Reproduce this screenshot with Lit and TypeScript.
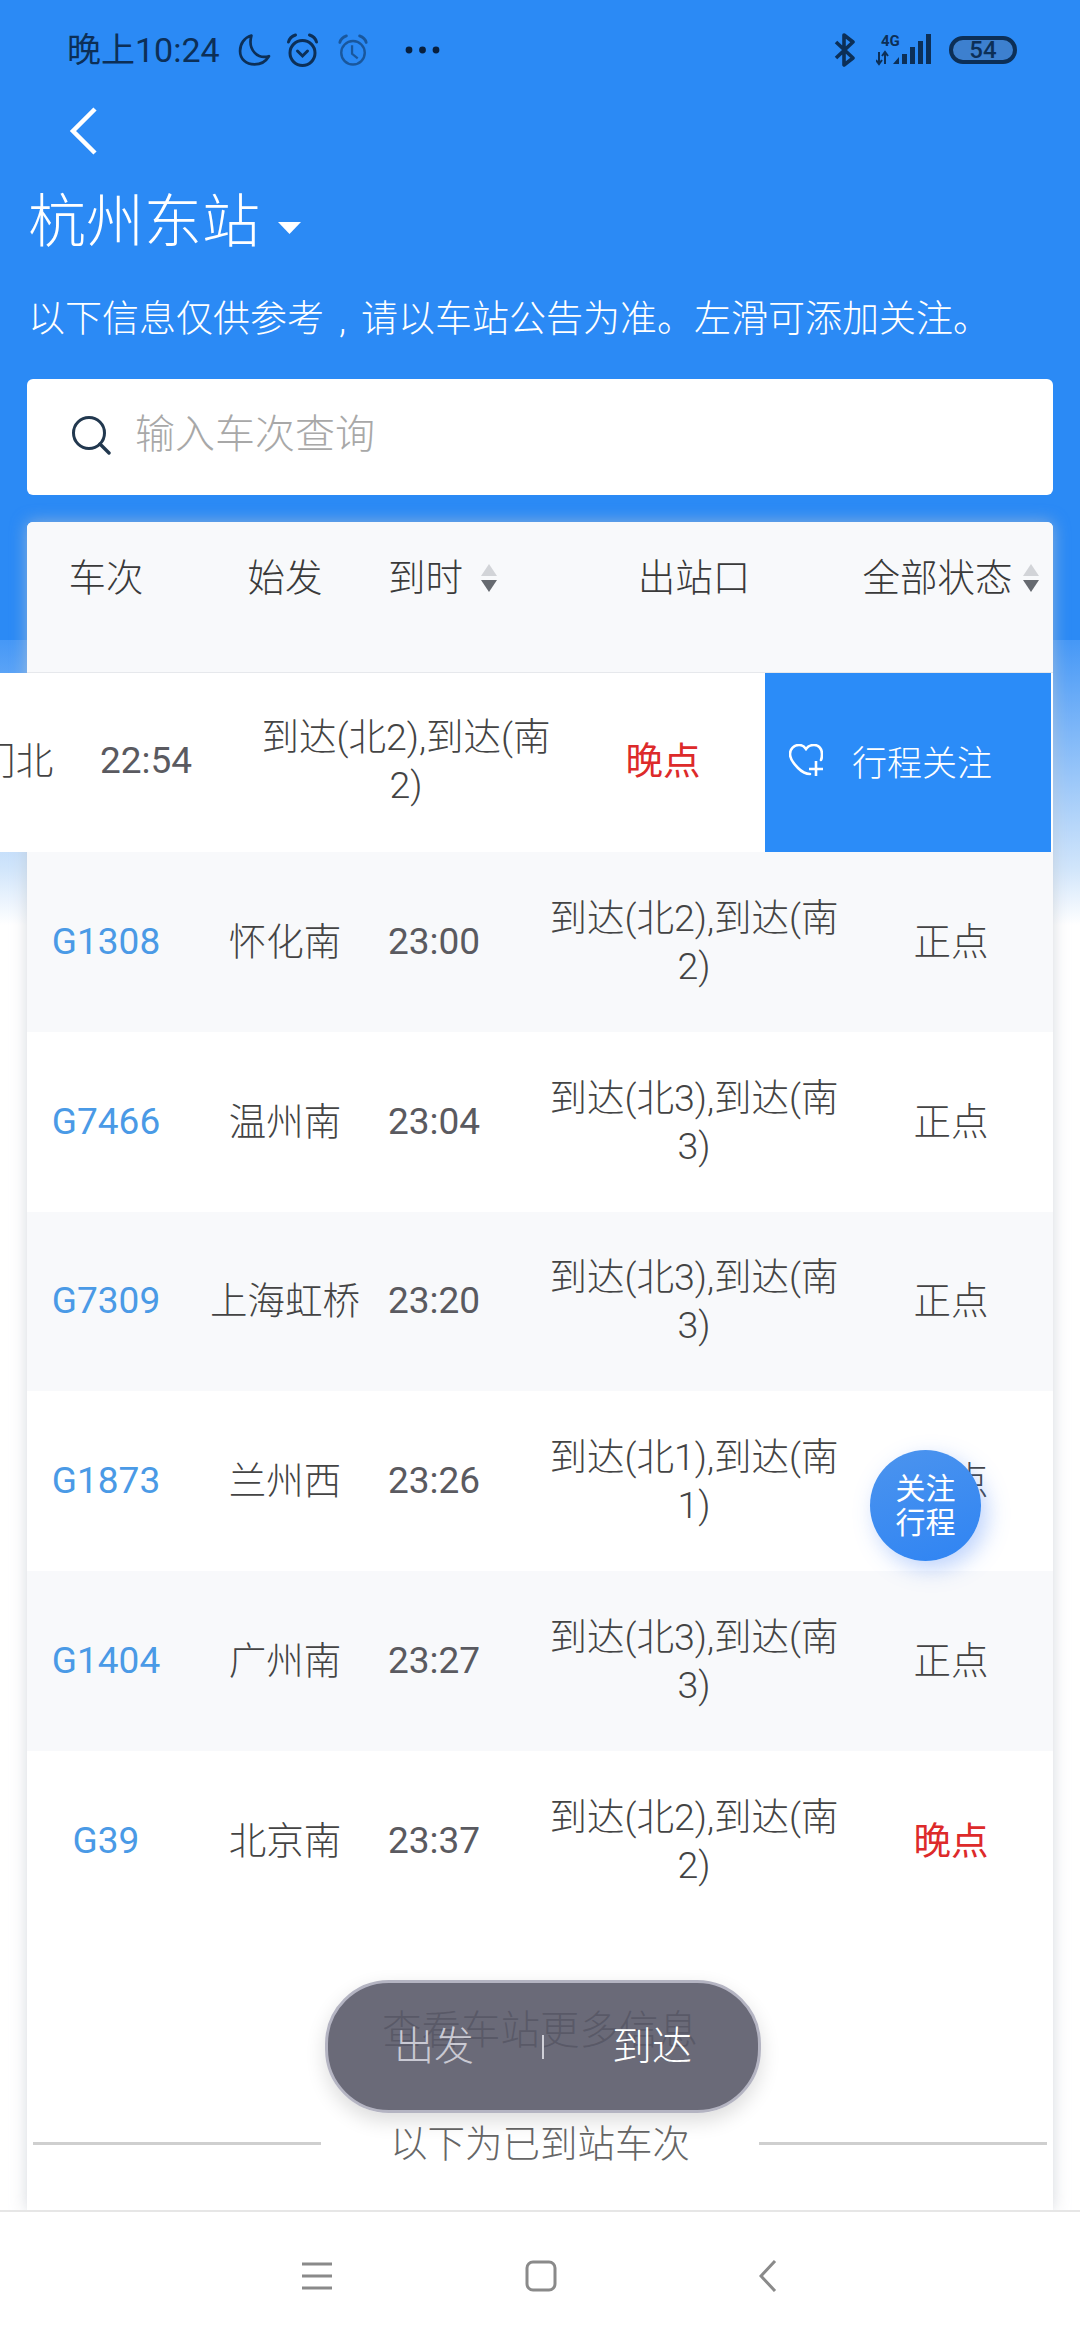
import { LitElement, html, css, svg } from "lit";
import { customElement } from "lit/decorators.js";

interface Row { no: string; from: string; time: string; exit: string; status: string; late?: boolean; }

const rows: Row[] = [
  { no: "G1308", from: "怀化南", time: "23:00", exit: "到达(北2),到达(南2)", status: "正点" },
  { no: "G7466", from: "温州南", time: "23:04", exit: "到达(北3),到达(南3)", status: "正点" },
  { no: "G7309", from: "上海虹桥", time: "23:20", exit: "到达(北3),到达(南3)", status: "正点" },
  { no: "G1873", from: "兰州西", time: "23:26", exit: "到达(北1),到达(南1)", status: "正点" },
  { no: "G1404", from: "广州南", time: "23:27", exit: "到达(北3),到达(南3)", status: "正点" },
  { no: "G39", from: "北京南", time: "23:37", exit: "到达(北2),到达(南2)", status: "晚点", late: true },
];

const sort = html`<svg class="sort" width="18" height="28" viewBox="0 0 18 28"><path d="M9 0L17 12H1Z" fill="#d2d4d8"/><path d="M1 16H17L9 28Z" fill="#666a70"/></svg>`;

const ears = svg`<path d="M3 9C4 5 7 3 10 2M31 9C30 5 27 3 24 2" fill="none" stroke="#0c2f57" stroke-width="3" stroke-linecap="round"/>`;

@customElement("app-root")
export class AppRoot extends LitElement {
  static styles = css`
    :host {
      display: block;
      position: relative;
      width: 1080px;
      height: 2340px;
      overflow: hidden;
      font-family: Roboto, "Noto Sans CJK SC", sans-serif;
      font-weight: 300;
      color: #444;
      font-size: 37.5px;
      background: linear-gradient(to bottom, #2b8af5 0, #2b8af5 640px, #4698f6 640px, #d2e6fb 870px, #fff 925px);
    }
    .page { display: flex; flex-direction: column; height: 2340px; }
    .main { flex: 1; min-height: 0; display: flex; flex-direction: column; overflow: hidden; }

    .status { height: 98px; flex: none; box-sizing: border-box; padding: 2px 63px 0 67px; display: flex; align-items: center; color: #0c2f57; font-weight: 400; }
    .clock { font-size: 34px; line-height: 40px; margin-right: 18px; }
    .alarm { margin-left: 14px; }
    .alarm2 { margin-left: 17px; opacity: .55; }
    .dots { margin-left: 36px; }
    .right { margin-left: auto; display: flex; align-items: center; }
    .signal { margin-left: 20px; }
    .battery { margin-left: 16px; width: 68px; height: 28px; box-sizing: border-box; border: 4px solid #0c2f57; border-radius: 14px; background: #3d80cf; display: flex; align-items: center; justify-content: center; font-size: 24px; font-weight: 500; line-height: 20px; }

    .back { height: 66px; flex: none; padding-left: 69px; display: flex; align-items: center; }
    .title { margin-top: 23px; height: 70px; padding-left: 28px; flex: none; display: flex; align-items: center; color: #fff; font-size: 58px; line-height: 70px; }
    .caret { margin: 12px 0 0 18px; }
    .note { margin-top: 38px; padding-left: 28px; flex: none; color: #fff; font-size: 37px; line-height: 50px; white-space: nowrap; }
    .comma { display: inline-block; width: 37px; text-align: center; }

    .search { margin: 34px 27px 0; height: 116px; flex: none; background: #fff; border-radius: 6px; display: flex; align-items: center; padding-left: 44px; padding-bottom: 4px; box-sizing: border-box; }
    .placeholder { margin-left: 24px; color: #a8a8a8; font-size: 40px; line-height: 50px; }

    .card { margin: 27px 27px 0; flex: 1; background: #fff; border-radius: 6px 6px 0 0; box-shadow: 0 0 16px rgba(190, 195, 205, .65); }
    .grid { display: grid; grid-template-columns: 158px 200px 154px 310px 204px; align-items: center; text-align: center; }
    .head { height: 151px; box-sizing: border-box; padding-bottom: 38px; background: #f8f9fb; border-radius: 6px 6px 0 0; border-bottom: 1px solid #e6e8ec; color: #3a3a3a; line-height: 48px; }
    .cell-inline { display: flex; align-items: center; justify-content: center; gap: 9px; }
    .time { text-align: left; padding-left: 3px; }
    .row .time, .slid .time { font-weight: 400; font-size: 37px; color: #5a5a60; }
    .head .time { justify-content: flex-start; gap: 17px; }
    .row { height: 179.8px; line-height: 48px; background: #fff; }
    .row.odd { background: #f8f9fb; }
    .exit { padding: 0 5px; }
    .no { color: #4a9ae6; font-weight: 400; font-size: 37px; }
    .late { color: #dd2a2a; font-weight: 400; }

    .slid { display: flex; width: 1312px; height: 179px; margin-left: -288px; }
    .slid .grid { width: 1026px; box-sizing: border-box; padding-bottom: 3px; background: #fff; line-height: 48px; }
    .action { width: 286px; background: #2b8cf8; color: #fff; display: flex; align-items: center; padding: 0 0 4px 24px; box-sizing: border-box; gap: 29px; font-size: 35px; }

    .more { text-align: center; margin-top: 76px; line-height: 48px; color: #555; font-size: 39.5px; }
    .divider { display: flex; align-items: center; justify-content: center; margin-top: 65px; padding: 0 6px; color: #666; line-height: 48px; }
    .line { flex: 1; height: 3px; background: #cfcfcf; }
    .divider-text { width: 438px; text-align: center; }

    .float { position: absolute; left: 870px; top: 1450px; width: 111px; height: 111px; border-radius: 50%; background: linear-gradient(160deg, #4c94ee, #2f84f3); color: #fff; font-size: 30px; font-weight: 400; line-height: 34px; text-align: center; display: flex; align-items: center; justify-content: center; box-shadow: 6px 8px 22px rgba(70, 130, 245, .35); }
    .pill { position: absolute; left: 325px; top: 1980px; width: 436px; height: 133px; box-sizing: border-box; border: 3px solid #b4b4c2; border-radius: 64px; background: rgba(90, 90, 105, .9); box-shadow: 0 8px 20px rgba(0, 0, 0, .14); display: flex; align-items: center; justify-content: center; gap: 68px; font-size: 40px; line-height: 48px; color: #c9c9d3; }
    .pill .active { color: #fff; }
    .sep { width: 2px; height: 24px; background: #d0d0d8; }

    .nav { height: 130px; flex: none; box-sizing: border-box; background: #fff; border-top: 2px solid #e6e6e6; display: flex; align-items: center; gap: 193px; padding-left: 302px; }
    .nav-back { margin-left: 9px; }
  `;

  private cells(r: { from: string; time: string; exit: string }) {
    return html`
      <div>${r.from}</div>
      <div class="time">${r.time}</div>
      <div class="exit">${r.exit}</div>`;
  }

  render() {
    return html`
      <div class="page">
        <div class="main">
          <div class="status">
            <span class="clock">晚上10:24</span>
            <svg width="33" height="34" viewBox="0 0 32 32"><path d="M13 2C6 4 2 10 2 17C2 25 8 30 16 30C22 30 27 27 30 22C20 25 9 17 13 2Z" fill="none" stroke="#0c2f57" stroke-width="2.6" stroke-linejoin="round"/></svg>
            <svg class="alarm" width="35" height="34" viewBox="0 0 34 34">${ears}<circle cx="17" cy="20" r="12.5" fill="none" stroke="#0c2f57" stroke-width="3"/><path d="M12 18L17 23L22 18" fill="none" stroke="#0c2f57" stroke-width="3" stroke-linecap="round"/></svg>
            <svg class="alarm2" width="32" height="32" viewBox="0 0 34 34">${ears}<circle cx="17" cy="20" r="12.5" fill="none" stroke="#0c2f57" stroke-width="2.6"/><path d="M16 12V21L22 26" fill="none" stroke="#0c2f57" stroke-width="2.4"/></svg>
            <svg class="dots" width="35" height="8" viewBox="0 0 35 8"><circle cx="4" cy="4" r="3.4" fill="#08203f"/><circle cx="17.5" cy="4" r="3.4" fill="#08203f"/><circle cx="31" cy="4" r="3.4" fill="#08203f"/></svg>
            <div class="right">
              <svg width="22" height="34" viewBox="0 0 22 34"><path d="M2 9L19 25L10 32V2L19 9L2 25" fill="none" stroke="#0c2f57" stroke-width="3.6" stroke-linejoin="round"/></svg>
              <svg class="signal" width="57" height="32" viewBox="0 0 57 32">
                <text x="5" y="12" font-size="15" font-weight="700" font-family="Roboto" fill="#0c2f57">4G</text>
                <path d="M3 18V29M0 26L3 30L6 26M9 30V19M6 22L9 18L12 22" fill="none" stroke="#0c2f57" stroke-width="2"/>
                <path d="M17 30L23 23V30ZM26 20H31V30H26ZM34 13H39V30H34ZM42 7H47V30H42ZM50 0H55V30H50Z" fill="#0c2f57"/>
              </svg>
              <div class="battery">54</div>
            </div>
          </div>

          <div class="back">
            <svg width="28" height="48" viewBox="0 0 28 48"><path d="M26 2L4 24L26 46" fill="none" stroke="#fff" stroke-width="4.5"/></svg>
          </div>
          <div class="title">杭州东站
            <svg class="caret" width="23" height="12" viewBox="0 0 23 12"><path d="M0 0H23L11.5 12Z" fill="#fff"/></svg>
          </div>
          <div class="note">以下信息仅供参考<span class="comma">,</span>请以车站公告为准。左滑可添加关注。</div>

          <div class="search">
            <svg width="40" height="40" viewBox="0 0 40 40"><circle cx="18" cy="18" r="15.5" fill="none" stroke="#22384f" stroke-width="3"/><path d="M29 29L38 38" stroke="#22384f" stroke-width="3.4" stroke-linecap="round"/></svg>
            <span class="placeholder">输入车次查询</span>
          </div>

          <div class="card">
            <div class="grid head">
              <div>车次</div>
              <div>始发</div>
              <div class="time cell-inline">到时${sort}</div>
              <div>出站口</div>
              <div class="cell-inline">全部状态${sort}</div>
            </div>

            <div class="slid">
              <div class="grid">
                <div></div>
                ${this.cells({ from: "厦门北", time: "22:54", exit: "到达(北2),到达(南2)" })}
                <div class="late">晚点</div>
              </div>
              <div class="action">
                <svg width="34" height="33" viewBox="0 0 34 33"><path d="M21 30C17 30 14 29 9 24C4 19 1 15 1 10C1 5 5 1 10 1C13 1 15 2 17 5C19 2 22 1 25 1C30 1 33 5 33 10C33 12 33 14 32 16" fill="none" stroke="#fff" stroke-width="2.6" stroke-linecap="round"/><path d="M27 17V32M20 25H34" stroke="#fff" stroke-width="2.6"/></svg>
                <span>行程关注</span>
              </div>
            </div>

            ${rows.map((r, i) => html`
              <div class="grid row ${i % 2 === 0 ? "odd" : ""}">
                <div class="no">${r.no}</div>
                ${this.cells(r)}
                <div class="${r.late ? "late" : ""}">${r.status}</div>
              </div>`)}

            <div class="more">查看车站更多信息</div>
            <div class="divider">
              <div class="line"></div>
              <div class="divider-text">以下为已到站车次</div>
              <div class="line"></div>
            </div>
          </div>
        </div>

        <div class="nav">
          <svg width="30" height="28" viewBox="0 0 30 28"><path d="M0 2H30M0 14H30M0 26H30" stroke="#8a8a8a" stroke-width="3"/></svg>
          <svg width="32" height="32" viewBox="0 0 32 32"><rect x="2" y="2" width="28" height="28" rx="6" fill="none" stroke="#8a8a8a" stroke-width="3"/></svg>
          <svg class="nav-back" width="18" height="32" viewBox="0 0 18 32"><path d="M16 1L2 16L16 31" fill="none" stroke="#8a8a8a" stroke-width="3"/></svg>
        </div>
      </div>

      <div class="float">关注<br />行程</div>
      <div class="pill">
        <span>出发</span>
        <span class="sep"></span>
        <span class="active">到达</span>
      </div>
    `;
  }
}
